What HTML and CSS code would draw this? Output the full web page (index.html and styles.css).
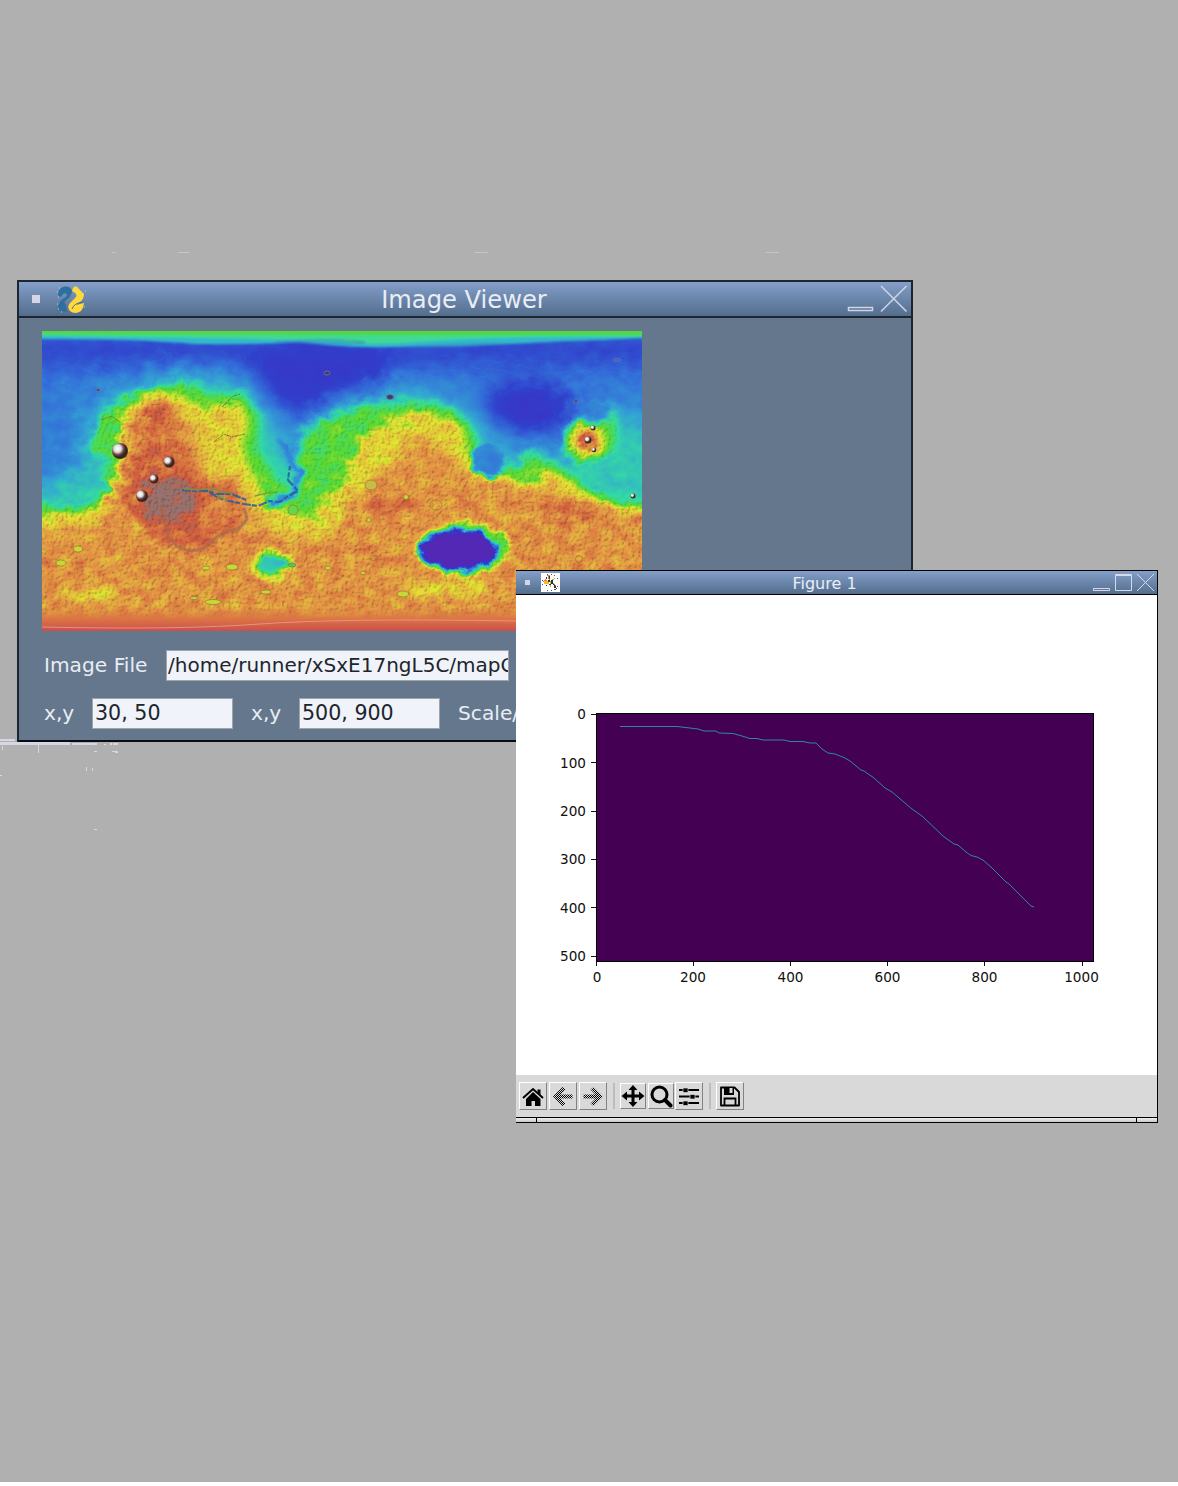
FILE: index.html
```html
<!DOCTYPE html>
<html lang="en">
<head>
<meta charset="utf-8">
<title>Image Viewer</title>
<link rel="stylesheet" href="styles.css">
</head>
<body>
<main class="desktop">
  <svg class="marks" width="800" height="600" viewBox="0 240 800 600" fill="#d6d6e4" shape-rendering="crispEdges">
    <path d="M112 252h4v1h-4zM178 252h11v1h-11zM475 252h13v1h-13zM766 252h13v1h-13z" fill="#c6c6c8"/>
    <path d="M0 739h15v2H0zM0 742h70v3H0zM72 743h25v2H72zM2 746h1v4H2zM38 745h1v8h-1zM0 775h2v1H0zM86 767h1v4h-1zM92 768h1v3h-1zM94 751h3v1h-3zM104 744h2v1h-2zM110 743h2v2h-2zM113 743h5v2h-5zM112 751h6v1h-6zM115 752h3v1h-3zM94 829h3v1h-3z"/>
  </svg>

  <section class="window viewer">
    <header class="titlebar">
      <span class="menu-dot"></span>
      <svg class="logo" width="29" height="29" viewBox="0 0 29 29">
        <path d="M1 8Q3 1 9 1.500Q15 2 15 7Q14 12 9 15Q6 18 9 20L10 27L3 26Q0 23 2 19Q3 15 9 12Q11 9 8 8Q5 9 4 12Q0 11 1 8Z" fill="#2f6f9f"/>
        <path d="M16 3Q19-1 22 4L27 9Q27 14 23 17L19 20L27 18Q27 22 24 26Q18 30 13 26Q9 21 14 17L19 12Q21 9 15 6Z" fill="#ffd83b"/>
        <path d="M15 24Q17 18 26 17" stroke="#4e6d8c" fill="none"/>
        <path d="M0 7h1M2 3h1M1 12h1M0 19h1M1 24h1M28 6h1M27 22h1M4 27h1" stroke="#b5cfe5"/>
      </svg>
      <h1 class="title">Image Viewer</h1>
      <svg class="controls" width="64" height="34" viewBox="846 282 64 34" fill="none" stroke="#d2d4e8">
        <rect x="848.500" y="307.500" width="24" height="3" stroke-width="1.500"/>
        <path d="M881 286L906.500 311.500M906.500 286L881 311.500" stroke-width="1.500"/>
      </svg>
    </header>
    <div class="viewer-body">
      <svg class="map" width="600" height="300" viewBox="42 331 600 300">
        <defs>
          <filter id="relief" filterUnits="userSpaceOnUse" x="42" y="331" width="600" height="300" color-interpolation-filters="sRGB">
            <feTurbulence type="fractalNoise" baseFrequency="0.07 0.09" numOctaves="4" seed="8" result="n"/>
            <feDisplacementMap in="SourceGraphic" in2="n" scale="12" xChannelSelector="R" yChannelSelector="G" result="h"/>
            <feColorMatrix in="n" type="matrix" values="1 0 0 0 0 1 0 0 0 0 1 0 0 0 0 0 0 0 0 1" result="gray"/>
            <feComposite in="h" in2="gray" operator="arithmetic" k1="0.22" k2="0.89" k3="0" k4="0" result="rough"/>
            <feComponentTransfer in="rough" result="color">
              <feFuncR type="table" tableValues=".40 .25 .19 .20 .20 .20 .35 .90 .91 .83 .60"/>
              <feFuncG type="table" tableValues=".14 .18 .25 .44 .64 .86 .86 .90 .62 .36 .45"/>
              <feFuncB type="table" tableValues=".66 .76 .80 .85 .83 .65 .20 .20 .27 .25 .43"/>
            </feComponentTransfer>
            <feTurbulence type="fractalNoise" baseFrequency="0.3" numOctaves="2" seed="3" result="fine"/>
            <feColorMatrix in="fine" type="matrix" values="0 0 0 0 0 0 0 0 0 0 0 0 0 0 0 1 0 0 0 0" result="bump"/>
            <feDiffuseLighting in="bump" surfaceScale="1.300" diffuseConstant="1.300" lighting-color="#fff" result="light">
              <feDistantLight azimuth="225" elevation="50"/>
            </feDiffuseLighting>
            <feComposite in="color" in2="light" operator="arithmetic" k1="0.5" k2="0.5" k3="0" k4="0" result="lit"/>
            <feColorMatrix in="h" type="matrix" values="0 0 0 0 0 0 0 0 0 0 0 0 0 0 0 5 0 0 0 -2.300" result="landMask"/>
            <feComposite in="lit" in2="landMask" operator="in" result="land"/>
            <feMerge><feMergeNode in="color"/><feMergeNode in="land"/></feMerge>
          </filter>
          <filter id="b1" x="-10%" y="-50%" width="120%" height="200%"><feGaussianBlur stdDeviation=".8"/></filter>
          <filter id="b2" x="-50%" y="-50%" width="200%" height="200%"><feGaussianBlur stdDeviation="2"/></filter>
          <filter id="b6" x="-50%" y="-50%" width="200%" height="200%"><feGaussianBlur stdDeviation="5"/></filter>
          <filter id="b12" x="-60%" y="-60%" width="220%" height="220%"><feGaussianBlur stdDeviation="13"/></filter>
          <radialGradient id="peak" cx=".35" cy=".35"><stop offset="0" stop-color="#fff"/><stop offset=".45" stop-color="#ddd"/><stop offset=".75" stop-color="#77504a"/><stop offset="1" stop-color="#3a2522"/></radialGradient>
          <linearGradient id="south" x1="0" y1="0" x2="0" y2="1"><stop offset="0" stop-color="#d98240" stop-opacity="0"/><stop offset=".5" stop-color="#dc7444"/><stop offset="1" stop-color="#cb4f4c"/></linearGradient>
        </defs>
        <g filter="url(#relief)">
          <rect x="0" y="300" width="690" height="370" fill="#535353"/>
          <g filter="url(#b12)">
            <rect x="20" y="335" width="660" height="30" fill="#303030"/>
            <ellipse cx="320" cy="378" rx="70" ry="38" fill="#2c2c2c"/>
            <ellipse cx="528" cy="407" rx="44" ry="24" fill="#202020"/>
            <path d="M20 490L80 470 90 405 180 372 250 385 280 430 300 460 330 405 400 388 460 405 510 455 580 460 620 410 680 440V670H20Z" fill="#777"/>
          </g>
          <g filter="url(#b6)">
            <path d="M20 500L80 512 107 495 108 460 92 440 110 406 155 387 190 382 220 398 240 390 260 415 258 450 280 480 292 488 305 430 345 410 420 400 455 410 474 430 481 450 510 475 530 450 580 480 600 505 680 500V670H20Z" fill="#979797"/>
            <path d="M20 520L95 508 120 480 116 440 126 403 160 390 200 405 240 402 248 425 240 445 250 468 268 505 310 520 350 475 365 435 420 410 460 425 470 460 520 485 555 470 600 508 680 520V670H20Z" fill="#b9b9b9"/>
            <path d="M20 535L100 525 120 470 135 410 165 405 195 425 205 480 240 495 270 530 325 540 375 475 430 435 465 475 520 485 580 495 680 520V670H20Z" fill="#cecece"/>
            <ellipse cx="587" cy="441" rx="21" ry="20" fill="#bcbcbc"/>
            <path d="M600 430L617 402V440L610 457Z" fill="#969696"/>
            <path d="M400 585Q450 575 500 585L475 597H415ZM60 600Q90 580 130 590L100 605Z" fill="#b8b8b8"/>
            <path d="M145 430H175L200 480 235 480 244 515 220 545 180 552 138 525 120 500Z" fill="#e0e0e0"/>
            <ellipse cx="157" cy="414" rx="15" ry="8" fill="#f4f4f4"/>
            <ellipse cx="170" cy="500" rx="28" ry="23" fill="#fff"/>
            <ellipse cx="215" cy="510" rx="20" ry="14" fill="#d6d6d6"/>
            <ellipse cx="392" cy="505" rx="28" ry="12" fill="#dadada"/>
            <ellipse cx="570" cy="512" rx="28" ry="12" fill="#d9d9d9"/>
          </g>
          <ellipse cx="108" cy="438" rx="12" ry="16" fill="#949494" filter="url(#b2)"/>
          <g filter="url(#b2)">
            <circle cx="488" cy="460" r="17" fill="#565656"/>
            <ellipse cx="462" cy="549" rx="46" ry="27" fill="#999"/>
            <ellipse cx="459" cy="550" rx="40" ry="21" fill="#0b0b0b"/>
            <path d="M480 532L503 530 508 540 498 543Z" fill="#999"/>
            <ellipse cx="272" cy="565" rx="23" ry="15" fill="#b1b1b1"/>
            <ellipse cx="272" cy="565" rx="15" ry="10" fill="#757575"/>
            <path d="M280 440L300 475 292 495 278 502 267 505" stroke="#555" stroke-width="7" fill="none"/>
          </g>
          <circle cx="588" cy="441" r="10" fill="#dedede" filter="url(#b2)"/>
        </g>
        <rect x="42" y="607" width="600" height="24" fill="url(#south)"/>
        <g filter="url(#b1)">
          <path d="M30 325H655V338Q560 341 510 344T390 347Q340 348 300 342Q250 345 195 344Q140 339 30 339Z" fill="#33b9cb"/>
          <path d="M30 325H655V337Q500 336 430 341T340 341Q240 338 30 336Z" fill="#43d993"/>
          <path d="M30 325H655V335Q400 335 30 334Z" fill="#50d93c"/>
          <path d="M275 342Q320 338 355 341T300 343M400 347Q470 343 510 344T642 338" fill="none" stroke="#3658b8" stroke-opacity=".6"/>
        </g>
        <path d="M42 627Q180 630 260 624T516 621" fill="none" stroke="#e89280"/>
        <g fill="none" stroke-linejoin="round" opacity=".85">
          <path d="M182 490L195 491 208 491 216 494 232 494 246 500M210 493L224 500 244 504 258 506 269 501 280 502 288 496 298 491 288 480 290 466" stroke="#285d9f" stroke-width="2.200" stroke-dasharray="9 1 5 2"/>
          <path d="M184 489L198 490 212 488 220 492 232 493M216 495L228 501M255 496L267 493 278 492" stroke="#6b9b42" stroke-width="1.500"/>
          <path d="M161 505L164 520 168 537 178 547 190 551 203 549 215 539 225 532 240 528 247 519 244 508" stroke="#9c6650" stroke-width="3" opacity=".7"/>
          <path d="M214 442L224 434 232 437 245 434M222 407L233 396 240 394M101 420L112 416 120 422" stroke="#587a28" stroke-width="1" stroke-dasharray="4 1 2 1"/>
        </g>
        <g fill="url(#peak)">
          <circle cx="120" cy="451" r="8"/><circle cx="169" cy="462" r="5.500"/><circle cx="154" cy="479" r="4.500"/><circle cx="142" cy="496" r="6"/><circle cx="588" cy="440" r="3.500"/><circle cx="593" cy="428" r="2.500"/><circle cx="594" cy="450" r="2.200"/><circle cx="633" cy="496" r="2.500"/>
        </g>
        <g fill="#39415f" stroke="#7c70a8" stroke-width=".8">
          <ellipse cx="98" cy="390" rx="2" ry="1.300"/><ellipse cx="327" cy="373" rx="3" ry="2"/><ellipse cx="390" cy="397" rx="3.500" ry="2.500"/><ellipse cx="576" cy="401" rx="2" ry="1.300"/><ellipse cx="617" cy="360" rx="4" ry="1.300" fill="none"/>
        </g>
        <g fill="#c5d936" stroke="#9c7434" stroke-width=".7">
          <ellipse cx="78" cy="549" rx="4.500" ry="3"/><ellipse cx="61" cy="563" rx="5" ry="3"/><ellipse cx="206" cy="568" rx="4" ry="2"/><ellipse cx="232" cy="567" rx="6" ry="3"/><ellipse cx="213" cy="602" rx="8" ry="2.500"/><ellipse cx="266" cy="592" rx="5" ry="2"/><ellipse cx="194" cy="598" rx="4" ry="1.500"/><ellipse cx="403" cy="594" rx="6" ry="3"/><ellipse cx="371" cy="485" rx="6" ry="5" fill="#c8bd42"/><ellipse cx="436" cy="505" rx="6" ry="5" fill="none"/><circle cx="406" cy="497" r="2.500"/><circle cx="369" cy="520" r="2.200"/><ellipse cx="374" cy="558" rx="4" ry="2.500" fill="none"/><ellipse cx="363" cy="573" rx="3" ry="1.500"/><circle cx="579" cy="559" r="3.500" fill="none"/><circle cx="293" cy="510" r="5" fill="#63d84b"/><ellipse cx="292" cy="565" rx="4" ry="2" fill="#47c86a"/><ellipse cx="328" cy="568" rx="3" ry="2"/>
        </g>
      </svg>
      <div class="row">
        <label class="label label-file">Image File</label>
        <div class="field field-file">/home/runner/xSxE17ngL5C/mapC</div>
      </div>
      <div class="row">
        <label class="label">x,y</label>
        <div class="field">30, 50</div>
        <label class="label label-next">x,y</label>
        <div class="field">500, 900</div>
        <label class="label label-next">Scale/</label>
      </div>
    </div>
  </section>

  <section class="window figure">
    <header class="titlebar">
      <span class="menu-dot"></span>
      <svg class="logo" width="19" height="19" viewBox="0 0 19 19" shape-rendering="crispEdges">
        <rect width="19" height="19" fill="#fff"/>
        <circle cx="9.500" cy="9.500" r="8.500" fill="none" stroke="#35597c" stroke-dasharray="1 3"/>
        <path d="M9 9L6 2H9ZM9 9L2 9 4 6Z" fill="#f07840"/><path d="M3 8h5v3H3z" fill="#f5bd27"/>
        <path d="M9 9L16 16 14 11Z" fill="#b46b50"/><path d="M9 9L14 5M9 9L10 14" stroke="#9acb45"/>
        <path d="M7 7h2v2H7zM10 7h2v4h-2zM8 11h2v1H8zM8 3h1v3H8zM13 13h2v2h-2zM5 12h1v1H5zM5 4h1v2H5zM12 11h1v1h-1zM13 12h1v1h-1zM15 15h1v1h-1z" fill="#333"/>
      </svg>
      <h2 class="title">Figure 1</h2>
      <svg class="controls" width="66" height="23" viewBox="1091 571 66 23" fill="none" stroke="#d8daec">
        <path d="M1093.500 588.500h16v2h-16z"/>
        <path d="M1115.500 575.500h16v15h-16zM1115 574.500h17"/>
        <path d="M1137 574L1154 591M1154 574L1137 591"/>
      </svg>
    </header>
    <svg class="plot" width="641" height="480" viewBox="516 595 641 480">
      <rect x="596.500" y="713.500" width="497" height="248" fill="#440154" stroke="#000"/>
      <path d="M591 714.500h5M591 762.500h5M591 811.500h5M591 859.500h5M591 907.500h5M591 956.500h5M596.500 962v4M693.500 962v4M790.500 962v4M887.500 962v4M984.500 962v4M1082.500 962v4" stroke="#111"/>
      <polyline fill="none" stroke="#30899a" points="620,726.500 677,726.500 690,728 698,729 704,731 716,731 719,733 733,733.500 742,736 750,738.500 757,738.500 763,740 784,740 790,741.500 803,741.500 810,743 816,743 822,749 828,753 835,754 845,758 850,761 861,770 864,771 874,778 885,788 892,792 912,809 922,816 943,836 954,844 958,845 966,852 971,855.500 977,857 983,860 992,868 1006,882 1009,884 1031,906 1034,907"/>
      <g class="ticks" text-anchor="end">
        <text x="586" y="719">0</text><text x="586" y="768">100</text><text x="586" y="816">200</text><text x="586" y="864">300</text><text x="586" y="913">400</text><text x="586" y="961">500</text>
      </g>
      <g class="ticks" text-anchor="middle">
        <text x="597" y="982">0</text><text x="693" y="982">200</text><text x="790.500" y="982">400</text><text x="887.500" y="982">600</text><text x="984.500" y="982">800</text><text x="1081.500" y="982">1000</text>
      </g>
    </svg>
    <nav class="toolbar">
      <button class="tool" aria-label="Home"><svg width="24" height="24" viewBox="0 0 24 24"><path d="M2 14L12 5L22 14" fill="none" stroke="#000" stroke-width="2"/><path d="M16.500 5.500h3V11l-3-3zM12 8L19.500 15V22H14V17H10.500V22H5V15Z"/></svg></button>
      <button class="tool" aria-label="Back"><svg width="24" height="24" viewBox="0 0 24 24"><defs><pattern id="dither" width="2" height="2" patternUnits="userSpaceOnUse"><path d="M0 0h1v1H0zM1 1h1v1H1z" shape-rendering="crispEdges"/></pattern></defs><path d="M11.500 3L14.500 5.500 9.500 10.500H21.500V14.500H9.500L14.500 19.500 11.500 22 2 12.500Z" fill="url(#dither)"/></svg></button>
      <button class="tool" aria-label="Forward"><svg width="24" height="24" viewBox="0 0 24 24"><path d="M12.500 3L9.500 5.500 14.500 10.500H2.500V14.500H14.500L9.500 19.500 12.500 22 22 12.500Z" fill="url(#dither)"/></svg></button>
      <span class="sep"></span>
      <button class="tool small" aria-label="Pan"><svg width="24" height="24" viewBox="0 0 24 24"><path d="M12 1L16.500 6H13.500V10.500H18V7.500L23.500 12 18 16.500V13.500H13.500V18H16.500L12 23 7.500 18H10.500V13.500H6V16.500L.5 12 6 7.500V10.500H10.500V6H7.500Z"/></svg></button>
      <button class="tool small" aria-label="Zoom"><svg width="24" height="24" viewBox="0 0 24 24" fill="none" stroke="#000"><circle cx="10.500" cy="10.500" r="7.500" stroke-width="3"/><path d="M16 16L21.500 21.500" stroke-width="4" stroke-linecap="round"/></svg></button>
      <button class="tool conf" aria-label="Configure"><svg width="24" height="24" viewBox="0 0 24 24"><path d="M2 5h20v2H2zM2 11.500h20v2H2zM2 18h20v2H2z"/><path d="M6 4h5v4.500H6zM13 10.500h5V15h-5zM6 17h5v4.500H6z" stroke="#d9d9d9" stroke-width=".7"/></svg></button>
      <span class="sep"></span>
      <button class="tool" aria-label="Save"><svg width="24" height="24" viewBox="0 0 24 24" fill="none" stroke="#000" stroke-width="1.800"><path d="M3 3.500H16.500L21 8V21.500H3Z" stroke-linejoin="round"/><path d="M6.500 21V14.500H17.500V21"/><path d="M6 3h10v8H6z" fill="#000" stroke="none"/><path d="M11.500 4h3v5h-3z" fill="#d9d9d9" stroke="none"/></svg></button>
    </nav>
    <footer class="resize"><i></i><i></i></footer>
  </section>
</main>
</body>
</html>
```
FILE: styles.css
```css
* { box-sizing: border-box; }
body {
  margin: 0;
  background: #fff;
  font-family: "DejaVu Sans", sans-serif;
}
svg { display: block; flex: none; }
.desktop {
  position: relative;
  height: 1482px;
  overflow: hidden;
  background: #b0b0b0;
}
.marks { position: absolute; left: 0; top: 240px; }
.window { position: absolute; display: flex; flex-direction: column; }
.titlebar {
  position: relative;
  display: flex;
  align-items: center;
  background: linear-gradient(#849fc9, #526d8c);
}
.menu-dot { background: #d6d5e6; }
.title {
  flex: 1;
  margin: 0;
  font-weight: 400;
  text-align: center;
  color: #e9edf5;
  white-space: nowrap;
}

.viewer {
  left: 17px;
  top: 280px;
  width: 896px;
  height: 462px;
  border: 2px solid #1d2530;
  border-bottom-color: #090c10;
  background: #64778d;
}
.viewer .titlebar { height: 36px; border-bottom: 2px solid #1d2530; padding-right: 1px; }
.viewer .menu-dot { width: 8px; height: 8px; margin: 0 17px 0 13px; }
.viewer .title { font-size: 24.200px; line-height: 34px; margin-left: -4px; padding-top: 2px; }
.viewer-body { display: flex; flex-direction: column; padding: 13px 0 0 23px; overflow: hidden; }
.row { display: flex; align-items: center; height: 31px; margin-top: 19px; }
.row + .row { margin-top: 17px; }
.label { width: 50px; padding: 0 0 2px 2px; font-size: 20.200px; line-height: 28px; color: #e8edf3; }
.label-file { width: 124px; white-space: nowrap; }
.label-next { width: 66px; padding-left: 18px; }
.field {
  width: 141px;
  height: 31px;
  padding-left: 2px;
  overflow: hidden;
  border: 1px solid #a0a5ac;
  background: #f0f3f9;
  color: #20252b;
  font-size: 20.600px;
  line-height: 28px;
  white-space: nowrap;
}
.field-file { width: 343px; padding-left: 1px; font-size: 20px; }

.figure {
  left: 516px;
  top: 570px;
  width: 642px;
  height: 553px;
  border: 1px solid #000;
  border-left: 0;
  background: #fff;
}
.figure .titlebar { height: 24px; border-bottom: 1px solid #000; }
.figure .menu-dot { width: 5px; height: 5px; margin: 0 11px 0 9px; }
.figure .title { font-size: 16px; line-height: 22px; padding-right: 2px; padding-top: 2px; }
.ticks { font-size: 13.600px; fill: #111; }
.toolbar {
  display: flex;
  align-items: center;
  height: 42px;
  padding-left: 3px;
  gap: 2px;
  background: #d9d9d9;
}
.tool {
  display: flex;
  align-items: center;
  justify-content: center;
  flex: none;
  width: 28px;
  height: 28px;
  padding: 0;
  border: 1px solid;
  border-color: #fff #828282 #828282 #fff;
  background: #d9d9d9;
}
.tool.small { width: 26px; height: 26px; }
.tool.conf { margin-left: -1px; }
.sep { width: 2px; height: 26px; margin: 0 3px 0 4px; background: #bdbdbd; }
.resize {
  display: flex;
  justify-content: space-between;
  height: 5px;
  border-top: 1px solid #000;
  padding: 0 20px;
  background: linear-gradient(#eeeeed, #c8cbc9);
}
.resize i { width: 1px; height: 4px; background: #000; }
```
